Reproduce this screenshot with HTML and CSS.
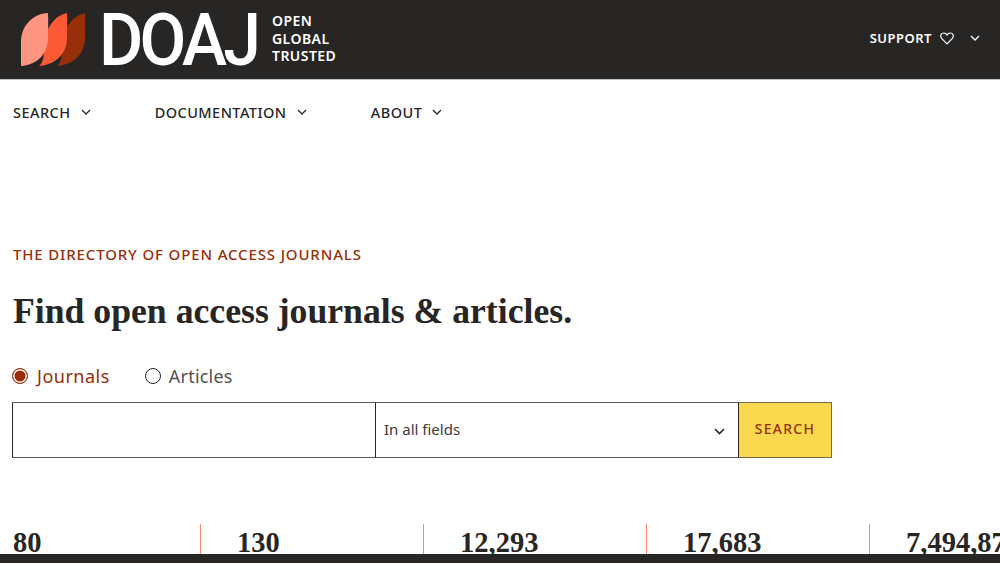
FILE: index.html
```html
<!DOCTYPE html>
<html lang="en">
<head>
<meta charset="UTF-8" />
<meta name="viewport" content="width=device-width, initial-scale=1" />
<title>DOAJ</title>
<link rel="stylesheet" href="styles.css">
</head>
<body>

<header class="top-bar">
  <div class="brand">
    <svg class="brand-mark" width="66" height="54" viewBox="0 0 66 54" aria-hidden="true">
      <path fill="#982e0a" transform="translate(36 0)" d="M0 53 C4 50 5 44 5 36 C5 18 14 3 28 0 C28.500 8 28 18 28 25 C28 42 15 52 0 53 Z"/>
      <path fill="#fb5a34" transform="translate(18 0)" d="M0 53 C4 50 5 44 5 36 C5 18 14 3 28 0 C28.500 8 28 18 28 25 C28 42 15 52 0 53 Z"/>
      <path fill="#ff9580" d="M0 53 L0 30 C0 12 12 1 27 0 C27.500 8 27 18 27 25 C27 42 15 52 0 53 Z"/>
    </svg>
    <span class="brand-name">DOAJ</span>
    <span class="brand-tag">OPEN<br>GLOBAL<br>TRUSTED</span>
  </div>
  <div class="support">
    <span>SUPPORT</span>
    <svg width="14" height="13" viewBox="0 0 14 13" aria-hidden="true">
      <path fill="none" stroke="#fff" stroke-width="1.2" d="M7 11.8 L1.6 6.3 C-0.4 3.9 1.2 1 3.8 1 C5.2 1 6.3 1.7 7 3 C7.7 1.7 8.8 1 10.2 1 C12.8 1 14.4 3.9 12.4 6.3 Z"/>
    </svg>
    <svg class="chev support-chev" width="10" height="6" viewBox="0 0 10 6" aria-hidden="true"><path d="M1 1 L5 5 L9 1"/></svg>
  </div>
</header>

<nav class="main-nav">
  <a>SEARCH <svg class="chev" width="10" height="6" viewBox="0 0 10 6" aria-hidden="true"><path d="M1 1 L5 5 L9 1"/></svg></a>
  <a>DOCUMENTATION <svg class="chev" width="10" height="6" viewBox="0 0 10 6" aria-hidden="true"><path d="M1 1 L5 5 L9 1"/></svg></a>
  <a>ABOUT <svg class="chev" width="10" height="6" viewBox="0 0 10 6" aria-hidden="true"><path d="M1 1 L5 5 L9 1"/></svg></a>
</nav>

<main class="hero">
  <p class="eyebrow">THE DIRECTORY OF OPEN ACCESS JOURNALS</p>
  <h1>Find open access journals &amp; articles.</h1>

  <div class="search-type">
    <label class="radio-on"><span class="radio"></span> Journals</label>
    <label class="radio-off"><span class="radio"></span> Articles</label>
  </div>

  <form class="search-form">
    <input type="text" class="search-input" />
    <div class="search-field">
      <span>In all fields</span>
      <svg width="11" height="7" viewBox="0 0 11 7" aria-hidden="true"><path d="M1 1 L5.5 5.5 L10 1"/></svg>
    </div>
    <button type="button">SEARCH</button>
  </form>

  <div class="stats">
    <div class="stat first">80</div>
    <div class="stat">130</div>
    <div class="stat">12,293</div>
    <div class="stat">17,683</div>
    <div class="stat">7,494,871</div>
  </div>
</main>

<div class="bottom-bar"></div>

</body>
</html>
```

FILE: styles.css
```css
html, body {
  margin: 0;
  height: 100%;
}
body {
  display: flex;
  flex-direction: column;
  height: 563px;
  overflow: hidden;
  background: #fff;
  color: #282624;
  font-family: "Noto Sans", sans-serif;
}
.top-bar {
  flex: none;
  height: 80px;
  box-sizing: border-box;
  display: flex;
  justify-content: space-between;
  align-items: center;
  padding: 0 20px 0 21px;
  background: #282624;
  color: #fff;
  border-bottom: 1px solid #c4c4c4;
}
.brand {
  display: flex;
  align-items: center;
}
.brand-name {
  margin-left: 12px;
  width: 173px;
  font-family: Roboto, sans-serif;
  font-size: 73px;
  line-height: 76px;
  font-weight: 500;
  letter-spacing: -4px;
  transform: scaleX(0.93);
  transform-origin: left center;
}
.brand-tag {
  font-size: 14px;
  line-height: 17.5px;
  font-weight: 600;
  letter-spacing: 0.45px;
  margin-top: -2px;
}
.support {
  display: flex;
  align-items: center;
  font-size: 13px;
  font-weight: 600;
  letter-spacing: 0.5px;
  margin-top: -3px;
}
.support svg {
  margin-left: 8px;
}
.chev {
  fill: none;
  stroke: #282624;
  stroke-width: 1.3;
}
.support-chev {
  stroke: #fff;
  margin-left: 16px !important;
}
.main-nav {
  flex: none;
  display: flex;
  gap: 64px;
  padding: 21px 13px 0;
  height: 31px;
}
.main-nav a {
  font-size: 14.5px;
  line-height: 22px;
  font-weight: 500;
  letter-spacing: 0.45px;
  white-space: nowrap;
}
.main-nav .chev {
  margin-left: 6px;
  vertical-align: 3px;
}
.hero {
  flex: 1;
  min-height: 0;
  overflow: hidden;
  padding: 0 13px 0 12px;
}
.eyebrow {
  margin: 112px 0 0 1px;
  font-size: 15px;
  line-height: 20px;
  font-weight: 500;
  letter-spacing: 0.85px;
  color: #982e0a;
}
h1 {
  margin: 25px 0 0 1px;
  font-family: "Liberation Serif", serif;
  font-size: 35.7px;
  line-height: 44px;
  font-weight: 700;
  white-space: nowrap;
}
.search-type {
  display: flex;
  gap: 35px;
  margin-top: 30px;
  font-size: 18px;
  line-height: 26px;
  letter-spacing: 0.5px;
}
.search-type label {
  display: flex;
  align-items: center;
  gap: 9px;
}
.radio {
  width: 16px;
  height: 16px;
  box-sizing: border-box;
  border-radius: 50%;
  border: 1.5px solid #282624;
}
.radio-on {
  color: #982e0a;
}
.radio-on .radio {
  border-color: #982e0a;
  background: #982e0a;
  box-shadow: inset 0 0 0 1.5px #fff;
}
.radio-off {
  color: #55514e;
  letter-spacing: 0.2px;
}
.radio-off.radio-off {
  gap: 8px;
}
.search-form {
  display: flex;
  width: 820px;
  height: 56px;
  margin-top: 13px;
}
.search-input {
  width: 363px;
  box-sizing: border-box;
  border: 1px solid #5e5c5a;
  border-right: none;
  border-left-color: #282624;
  border-radius: 0;
  outline: none;
  background: #fff;
}
.search-field {
  width: 364px;
  box-sizing: border-box;
  display: flex;
  justify-content: space-between;
  align-items: center;
  padding: 0 13px 2px 8px;
  border: 1px solid #5e5c5a;
  border-left-color: #282624;
  border-right-color: #282624;
  font-size: 15px;
  color: #3c3a38;
}
.search-field svg {
  fill: none;
  stroke: #282624;
  stroke-width: 1.6;
  margin-top: 4px;
}
.search-form button {
  flex: 1;
  border: 1px solid #6f6a52;
  border-left: none;
  border-radius: 0;
  padding: 0 0 3px;
  background: #f9d84e;
  color: #982e0a;
  font-family: "Noto Sans", sans-serif;
  font-size: 14px;
  font-weight: 500;
  letter-spacing: 1.3px;
}
.stats {
  display: grid;
  grid-template-columns: 188px repeat(4, 223px);
  margin-top: 66px;
  width: 1100px;
}
.stat {
  height: 60px;
  box-sizing: border-box;
  padding-left: 36px;
  border-left: 1px solid #ff8a70;
  font-family: "Liberation Serif", serif;
  font-size: 28.5px;
  line-height: 38px;
  font-weight: 700;
  white-space: nowrap;
}
.stat.first {
  border-left: none;
  padding-left: 1px;
}
.bottom-bar {
  flex: none;
  height: 9px;
  background: #282624;
}
```
